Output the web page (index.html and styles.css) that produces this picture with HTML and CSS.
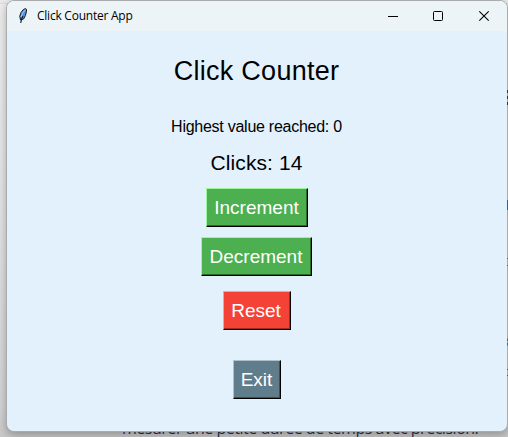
FILE: index.html
```html
<!DOCTYPE html>
<html lang="en">
<head>
<meta charset="utf-8">
<title>Click Counter App</title>
<link rel="stylesheet" href="styles.css">
</head>
<body>
<p class="page-text">mesurer une petite durée de temps avec précision.</p>
<main class="window">
  <header class="titlebar">
    <svg class="feather" width="12" height="17" viewBox="0 0 12 17">
      <path d="M8.5 1.5 Q10 2 9.5 4 Q9 9 6.5 12 L3.5 13 Q1.8 9 4 5.5 Q6 2 8.5 1.5Z" fill="#4d93dc" stroke="#17202c" stroke-width="1"/>
      <path d="M8 3 Q5 6 4 10" fill="none" stroke="#a9d0f5" stroke-width="1"/>
      <path d="M6 9 Q4.2 12 3.7 16" fill="none" stroke="#101820" stroke-width="1.1"/>
    </svg>
    <span class="caption">Click Counter App</span>
    <svg class="controls" width="104" height="14" viewBox="0 0 104 14" fill="none" stroke="#000">
      <path d="M1 7.5H11"/>
      <rect x="46.5" y="2.5" width="9" height="9" rx="1"/>
      <path d="M92.3 2.3L101.7 11.7M101.7 2.3L92.3 11.7" stroke-width="1.1"/>
    </svg>
  </header>
  <section class="content">
    <h1>Click Counter</h1>
    <p class="highest">Highest value reached: 0</p>
    <p class="clicks">Clicks: 14</p>
    <button class="btn increment">Increment</button>
    <button class="btn decrement">Decrement</button>
    <button class="btn reset">Reset</button>
    <button class="btn exit">Exit</button>
  </section>
</main>
<i class="edge edge-menu"></i>
<i class="edge edge-link"></i>
<i class="edge edge-item"></i>
<i class="edge edge-icon"></i>
<i class="edge edge-last"></i>
</body>
</html>
```
FILE: styles.css
```css
* { box-sizing: border-box; }
body {
  margin: 0;
  height: 437px;
  overflow: hidden;
  position: relative;
  background: linear-gradient(#e9e9e9 0 3px, #dcdcdc 3px 4px, #ededed 4px, #e2e2e2 50%, #d2d2d2 94%, #c8c8c8);
  font-family: "Liberation Sans", Arial, sans-serif;
  color: #000;
}
h1, p { margin: 0; font-weight: 400; white-space: nowrap; }
.page-text {
  position: absolute;
  left: 122px;
  top: 417px;
  font: 16px/22px "Open Sans", sans-serif;
  letter-spacing: -0.48px;
  color: #28304a;
}
.window {
  position: relative;
  width: 502px;
  height: 432px;
  margin-left: 6px;
  border: 1px solid #a9abad;
  border-radius: 8px;
  overflow: hidden;
  background: #e3f1fd;
  box-shadow: 0 3px 9px rgba(0, 0, 0, .28);
}
.titlebar {
  height: 30px;
  display: flex;
  align-items: center;
  padding: 0 16px 0 10px;
  background: #edf4f8;
}
.feather { margin-top: -2px; }
.caption {
  margin-left: 8px;
  font: 12px/16px "Open Sans", sans-serif;
  letter-spacing: -0.24px;
}
.controls { margin-left: auto; }
.content {
  display: flex;
  flex-direction: column;
  align-items: center;
  padding-right: 1px;
}
h1 {
  margin-top: 24px;
  font-size: 27px;
  line-height: 32px;
  letter-spacing: .28px;
}
.highest {
  margin-top: 30px;
  font-size: 16px;
  line-height: 20px;
  letter-spacing: -.26px;
}
.clicks {
  margin-top: 14px;
  font-size: 21px;
  line-height: 24px;
  letter-spacing: .1px;
}
.btn {
  height: 39px;
  padding: 0;
  border-style: solid;
  border-width: 1px;
  border-radius: 0;
  font: 19px/37px "Liberation Sans", Arial, sans-serif;
  color: #fff;
}
.increment, .decrement {
  background: #4caf50;
  border-color: #9df5a0 #000 #000 #9df5a0;
  box-shadow: inset -1px -1px #286b2b;
}
.increment { width: 102px; margin-top: 13px; }
.decrement { width: 111px; margin-top: 10px; padding-right: 1px; }
.reset {
  width: 68px;
  margin-top: 15px;
  padding-right: 1px;
  background: #f44336;
  border-color: #ff9d96 #000 #000 #ff9d96;
  box-shadow: inset -1px -1px #a12b23;
}
.exit {
  width: 48px;
  margin-top: 30px;
  background: #607d8b;
  border-color: #aec1ca #000 #000 #aec1ca;
  box-shadow: inset -1px -1px #3b505b;
}
.edge {
  position: absolute;
  left: 507px;
  width: 1px;
  background: #444;
}
.edge-menu {
  top: 90px;
  height: 15px;
  background: repeating-linear-gradient(#333 0 3px, #aaa 3px 6px);
}
.edge-link { top: 200px; height: 10px; background: #405a80; }
.edge-item {
  top: 258px;
  height: 8px;
  background: linear-gradient(#555 1px, transparent 1px 7px, #555 7px);
}
.edge-icon {
  top: 338px;
  height: 8px;
  background: linear-gradient(#a87852 1px, #44657d 1px 3px, #7fa8bd 3px 5px, #44657d 5px 7px, #a87852 7px);
}
.edge-last {
  top: 369px;
  height: 7px;
  background: linear-gradient(#555 1px, transparent 1px 6px, #555 6px);
}
```
